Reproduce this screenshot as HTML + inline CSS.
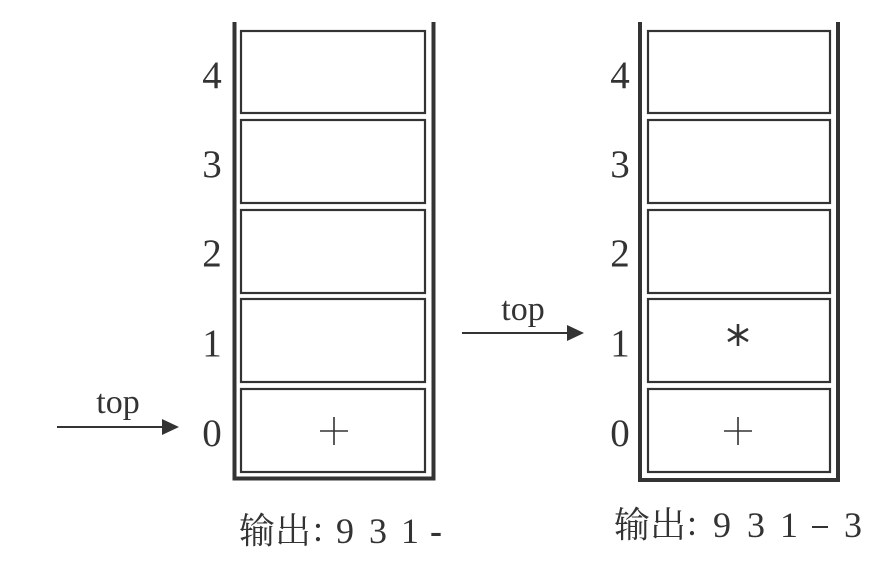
<!DOCTYPE html>
<html><head><meta charset="utf-8"><style>
html,body{margin:0;padding:0;background:#fff;width:892px;height:569px;overflow:hidden}
svg text{font-family:"Liberation Serif","Noto Serif CJK SC",serif;fill:#333}
</style></head><body>
<svg width="892" height="569" viewBox="0 0 892 569">
<g stroke="#333" fill="none">
<path d="M234.5 22 V478.5 H433.5 V22" stroke-width="4"/>
<rect x="241" y="31" width="184" height="82" stroke-width="2.2"/>
<rect x="241" y="120" width="184" height="83" stroke-width="2.2"/>
<rect x="241" y="210" width="184" height="83" stroke-width="2.2"/>
<rect x="241" y="299" width="184" height="83" stroke-width="2.2"/>
<rect x="241" y="389" width="184" height="83" stroke-width="2.2"/>
<path d="M640 22 V480 H838 V22" stroke-width="4"/>
<rect x="648" y="31" width="182" height="82" stroke-width="2.2"/>
<rect x="648" y="120" width="182" height="83" stroke-width="2.2"/>
<rect x="648" y="210" width="182" height="83" stroke-width="2.2"/>
<rect x="648" y="299" width="182" height="83" stroke-width="2.2"/>
<rect x="648" y="389" width="182" height="83" stroke-width="2.2"/>
<path d="M57 427 H165" stroke-width="2"/>
<path d="M462 333 H570" stroke-width="2"/>
<path d="M320 431 H348 M334 417 V445" stroke-width="1.6"/>
<path d="M724 431 H752 M738 417 V445" stroke-width="1.6"/>
<path d="M738 324 V346 M728 329 L748 341 M748 329 L728 341" stroke-width="2.6"/>
<path d="M812 527 H828" stroke-width="2"/>
</g>
<path d="M162 419 L179 427 L162 435 Z" fill="#333"/>
<path d="M567 325 L584 333 L567 341 Z" fill="#333"/>
<g font-size="39" text-anchor="middle">
<text x="212" y="88">4</text><text x="212" y="177">3</text><text x="212" y="266">2</text><text x="212" y="356">1</text><text x="212" y="446">0</text>
<text x="620" y="88">4</text><text x="620" y="177">3</text><text x="620" y="266">2</text><text x="620" y="356">1</text><text x="620" y="446">0</text>
</g>
<text x="118" y="413" font-size="34" text-anchor="middle">top</text>
<text x="523" y="320" font-size="34" text-anchor="middle">top</text>
<g font-size="36">
<text x="239" y="543">输出</text><text x="318" y="541" text-anchor="middle">:</text>
<text x="345" y="543" text-anchor="middle">9</text><text x="378" y="543" text-anchor="middle">3</text><text x="410" y="543" text-anchor="middle">1</text><text x="436" y="543" text-anchor="middle" font-family="Liberation Sans,sans-serif" font-weight="bold">-</text>
<text x="614" y="537">输出</text><text x="692" y="535" text-anchor="middle">:</text>
<text x="722" y="537" text-anchor="middle">9</text><text x="756" y="537" text-anchor="middle">3</text><text x="789" y="537" text-anchor="middle">1</text><text x="853" y="537" text-anchor="middle">3</text>
</g>
</svg>
</body></html>
